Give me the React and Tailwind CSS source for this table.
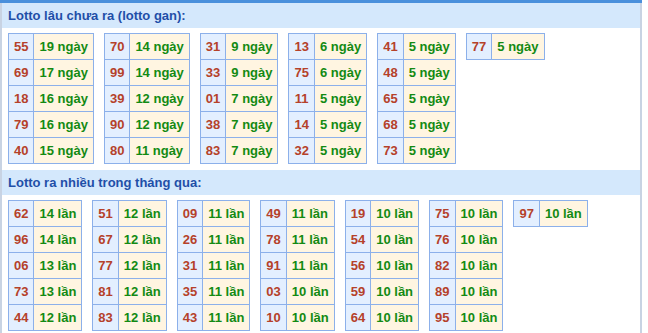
import React from 'react';

const gan = [
  [['55', '19'], ['69', '17'], ['18', '16'], ['79', '16'], ['40', '15']],
  [['70', '14'], ['99', '14'], ['39', '12'], ['90', '12'], ['80', '11']],
  [['31', '9'], ['33', '9'], ['01', '7'], ['38', '7'], ['83', '7']],
  [['13', '6'], ['75', '6'], ['11', '5'], ['14', '5'], ['32', '5']],
  [['41', '5'], ['48', '5'], ['65', '5'], ['68', '5'], ['73', '5']],
  [['77', '5']],
];

const nhieu = [
  [['62', '14'], ['96', '14'], ['06', '13'], ['73', '13'], ['44', '12']],
  [['51', '12'], ['67', '12'], ['77', '12'], ['81', '12'], ['83', '12']],
  [['09', '11'], ['26', '11'], ['31', '11'], ['35', '11'], ['43', '11']],
  [['49', '11'], ['78', '11'], ['91', '11'], ['03', '10'], ['10', '10']],
  [['19', '10'], ['54', '10'], ['56', '10'], ['59', '10'], ['64', '10']],
  [['75', '10'], ['76', '10'], ['82', '10'], ['89', '10'], ['95', '10']],
  [['97', '10']],
];

const LottoTable = ({ rows, unit }) => (
  <table className="border-collapse self-start">
    <tbody>
      {rows.map(([num, count]) => (
        <tr key={num} className="h-[26px]">
          <td className="border border-[#8cb0ea] bg-[#e3efff] px-[5px] text-center text-[#b5412a]">{num}</td>
          <td className="border border-[#8cb0ea] bg-[#fff5e1] px-[5px] text-[#138a13]">{count} {unit}</td>
        </tr>
      ))}
    </tbody>
  </table>
);

const Section = ({ title, tables, unit }) => (
  <div>
    <div className="h-[25px] bg-[#d4e8fc] pl-[6px] leading-[25px] text-[#1f4fa8]">{title}</div>
    <div className="flex gap-[10px] px-[6px] pt-[5px] pb-[6px]">
      {tables.map((rows, i) => (
        <LottoTable key={i} rows={rows} unit={unit} />
      ))}
    </div>
  </div>
);

export default function App() {
  return (
    <div className="h-[333px] w-[648px] overflow-hidden bg-white font-['Liberation_Sans',Arial,sans-serif] text-[13px] font-bold">
      <div className="h-[3px] w-[642px] bg-[#4a90dc]" />
      <div className="h-[330px] w-[642px] border-l-2 border-r-2 border-[#c8d3e3]">
        <Section title="Lotto lâu chưa ra (lotto gan):" tables={gan} unit="ngày" />
        <Section title="Lotto ra nhiều trong tháng qua:" tables={nhieu} unit="lần" />
      </div>
    </div>
  );
}
